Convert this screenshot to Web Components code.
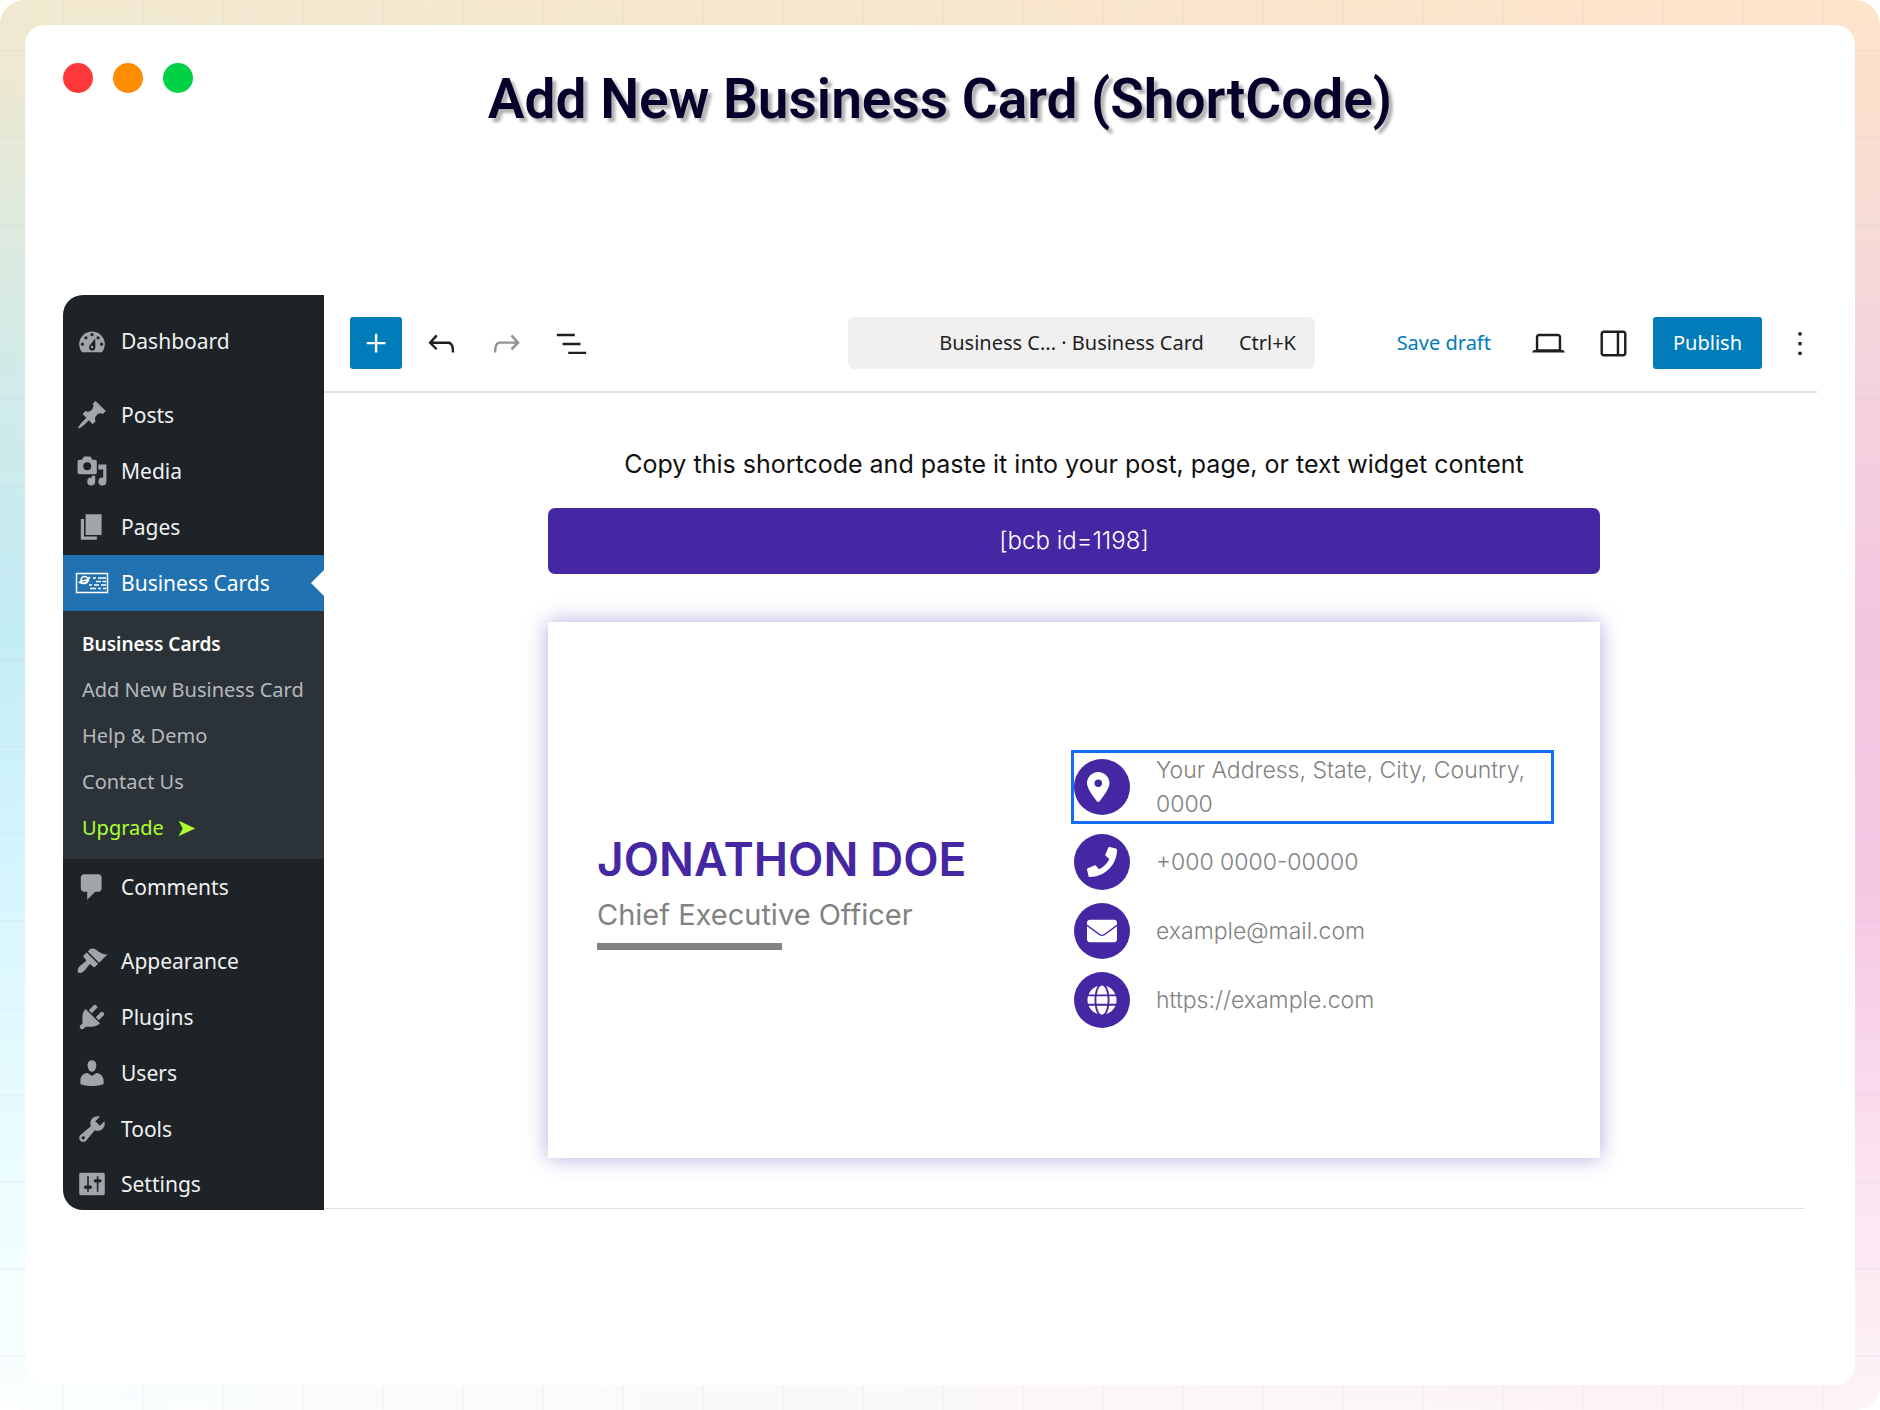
<!DOCTYPE html>
<html lang="en">
<head>
<meta charset="utf-8">
<title>Add New Business Card (ShortCode)</title>
<style>
  body {
    margin: 0;
    font-family: "Noto Sans", "Open Sans", sans-serif;
  }
</style>
</head>
<body>
<window-frame>
  <span slot="title">Add New Business Card (ShortCode)</span>
  <admin-menu slot="menu">
    <menu-item icon="dashboard" class="last">Dashboard</menu-item>
    <menu-item icon="post">Posts</menu-item>
    <menu-item icon="media">Media</menu-item>
    <menu-item icon="page">Pages</menu-item>
    <menu-item icon="card" current>Business Cards</menu-item>
    <sub-menu>
      <sub-item current>Business Cards</sub-item>
      <sub-item>Add New Business Card</sub-item>
      <sub-item>Help &amp; Demo</sub-item>
      <sub-item>Contact Us</sub-item>
      <sub-item upgrade>Upgrade</sub-item>
    </sub-menu>
    <menu-item icon="comment" class="last">Comments</menu-item>
    <menu-item icon="appearance">Appearance</menu-item>
    <menu-item icon="plugin">Plugins</menu-item>
    <menu-item icon="user">Users</menu-item>
    <menu-item icon="tool">Tools</menu-item>
    <menu-item icon="setting">Settings</menu-item>
  </admin-menu>
  <editor-bar slot="bar"></editor-bar>
  <editor-canvas slot="canvas">
    <short-code>[bcb id=1198]</short-code>
    <business-card>
      <span slot="name">JONATHON DOE</span>
      <span slot="role">Chief Executive Officer</span>
      <contact-row icon="pin" selected>Your Address, State, City, Country, 0000</contact-row>
      <contact-row icon="phone">+000 0000-00000</contact-row>
      <contact-row icon="mail">example@mail.com</contact-row>
      <contact-row icon="globe">https://example.com</contact-row>
    </business-card>
  </editor-canvas>
</window-frame>

<script>
(function () {
  const icons = {
    // admin menu, 20 unit grid
    dashboard: ['0 0 20 20', '<path fill-rule="evenodd" d="M3.8 17h12.4c1.1-1.4 1.8-3.1 1.8-5a8 8 0 0 0-16 0c0 1.900.7 3.600 1.800 5zM9 6a1 1 0 1 1 2 0 1 1 0 0 1-2 0zM5.200 8a1 1 0 1 1 2 0 1 1 0 0 1-2 0zM12.800 8a1 1 0 1 1 2 0 1 1 0 0 1-2 0zM3 12a1 1 0 1 1 2 0 1 1 0 0 1-2 0zM15 12a1 1 0 1 1 2 0 1 1 0 0 1-2 0zM12 8.500l.1 5.400a2 2 0 1 1-3.700-.9z"/><circle cx="10" cy="13.800" r=".8"/>'],
    post: ['0 0 20 20', '<path d="M10.440 3.020l1.820-1.820 6.360 6.350-1.830 1.820c-1.050-.68-2.480-.57-3.410.36l-.75.75c-.92.93-1.040 2.350-.35 3.410l-1.830 1.820-2.410-2.410-2.800 2.790c-.42.42-3.380 2.710-3.800 2.290s1.860-3.390 2.280-3.810l2.790-2.790L4.100 9.360l1.830-1.820c1.050.69 2.480.57 3.400-.36l.75-.75c.93-.92 1.050-2.350.36-3.410z"/>'],
    media: ['0 0 20 20', '<path fill-rule="evenodd" d="M13 11V4c0-.55-.45-1-1-1h-1.670L9 1H5L3.670 3H2c-.55 0-1 .45-1 1v7c0 .55.45 1 1 1h10c.55 0 1-.45 1-1zM7 4.500a2.500 2.500 0 1 1 0 5 2.500 2.500 0 0 1 0-5zM14 6h5v10.500a2.500 2.500 0 1 1-2.500-2.500c.17 0 .34.02.5.05V9h-3V6zm-4 8.050V13h2v3.500a2.500 2.500 0 1 1-2.500-2.500c.17 0 .34.02.5.05z"/>'],
    page: ['0 0 20 20', '<path d="M6 15V2h10v13H6zm-1 1h8v2H3V5h2v11z"/>'],
    card: ['0 0 34 22', '<g fill="none" stroke="currentColor" stroke-width="1.500"><path d="M1.500 1.500h31v19h-31z"/><circle cx="9.500" cy="8" r="3.500"/><path d="M4 11q2-3 5-2.500T15 5M5 10.500q4 3 9-3M18 6h3M23 6h8M21 9.500h5M27.500 9.500H31M14 13h3M19 13h5M26 13h5M15 16.500h6M23 16.500h3M28 16.500h3"/></g>'],
    comment: ['0 0 20 20', '<path d="M5 2h9c1.100 0 2 .9 2 2v7c0 1.100-.9 2-2 2h-2l-5 5v-5H5c-1.100 0-2-.9-2-2V4c0-1.100.9-2 2-2z"/>'],
    appearance: ['0 0 20 20', '<path d="M14.480 11.060L7.410 3.990l1.500-1.500c.5-.56 2.300-.47 3.510.32 1.210.8 1.430 1.280 2.910 2.100 1.180.64 2.450 1.260 4.450.85zm-.71.71L6.700 4.700 4.930 6.470c-.39.39-.39 1.020 0 1.410l1.060 1.060c.39.39.39 1.030 0 1.420-.6.6-1.430 1.110-2.210 1.690-.35.26-.7.53-1.010.84C1.430 14.230.4 16.080 1.400 17.070c.99 1 2.840-.03 4.180-1.360.31-.31.58-.66.85-1.020.57-.78 1.080-1.610 1.690-2.210.39-.39 1.020-.39 1.410 0l1.060 1.060c.39.39 1.020.39 1.410 0z"/>'],
    plugin: ['0 0 20 20', '<path d="M13.110 4.360L9.870 7.600 8 5.730l3.240-3.240c.35-.34 1.050-.2 1.560.32.52.51.66 1.210.31 1.550zm-8 1.770l.91-1.120 9.010 9.010-1.190.84c-.71.71-2.630 1.160-3.820 1.160H6.140L4.900 17.260c-.59.59-1.540.59-2.120 0-.59-.58-.59-1.530 0-2.120l1.240-1.240v-3.880c0-1.130.4-3.190 1.090-3.890zm7.260 3.970l3.240-3.240c.34-.35 1.040-.21 1.550.31.52.51.66 1.210.31 1.550l-3.240 3.250z"/>'],
    user: ['0 0 20 20', '<path d="M10 9.250c-2.270 0-2.730-3.440-2.730-3.440C7 4.020 7.820 2 9.970 2c2.160 0 2.980 2.020 2.710 3.810 0 0-.41 3.440-2.680 3.440zm0 2.570L12.720 10c2.390 0 4.520 2.330 4.520 4.530v2.490s-3.650 1.130-7.240 1.130c-3.650 0-7.240-1.130-7.240-1.130v-2.490c0-2.250 1.940-4.480 4.470-4.480z"/>'],
    tool: ['0 0 20 20', '<path fill-rule="evenodd" d="M16.680 9.770c-1.340 1.340-3.300 1.670-4.950.99l-5.410 6.520c-.99.99-2.590.99-3.580 0s-.99-2.590 0-3.570l6.520-5.420c-.68-1.650-.35-3.610.99-4.950 1.280-1.280 3.120-1.620 4.720-1.060l-2.890 2.890 2.820 2.820 2.860-2.870c.53 1.580.18 3.390-1.080 4.650zM3.810 16.210c.4.39 1.040.39 1.430 0 .4-.4.4-1.040 0-1.430-.39-.4-1.030-.4-1.430 0-.39.39-.39 1.030 0 1.430z"/>'],
    setting: ['0 0 20 20', '<path fill-rule="evenodd" d="M18 16V4c0-.55-.45-1-1-1H3c-.55 0-1 .45-1 1v12c0 .55.45 1 1 1h14c.55 0 1-.45 1-1zM8 11h1c.55 0 1 .45 1 1s-.45 1-1 1H8v1.500c0 .28-.22.5-.5.5s-.5-.22-.5-.5V13H6c-.55 0-1-.45-1-1s.45-1 1-1h1V5.500c0-.28.22-.5.5-.5s.5.22.5.5V11zm5-2h-1c-.55 0-1-.45-1-1s.45-1 1-1h1V5.500c0-.28.22-.5.5-.5s.5.22.5.5V7h1c.55 0 1 .45 1 1s-.45 1-1 1h-1v5.500c0 .28-.22.5-.5.5s-.5-.22-.5-.5V9z"/>'],
    // editor bar, 24 unit grid
    plus: ['0 0 24 24', '<path d="M11 12.500V17.500H12.500V12.500H17.500V11H12.500V6H11V11H6V12.500H11Z"/>'],
    undo: ['0 0 24 24', '<path d="M18.300 11.700c-.6-.6-1.400-.9-2.300-.9H6.700l2.900-3.300-1.100-1-4.500 5L8.500 16l1-1-2.700-2.700H16c.5 0 .9.2 1.300.5 1 1 1 3.400 1 4.500v.3h1.500v-.2c0-1.500 0-4.300-1.500-5.700z"/>'],
    redo: ['0 0 24 24', '<path d="M15.600 6.500l-1.100 1 2.900 3.300H8c-.9 0-1.700.3-2.300.9-1.400 1.500-1.400 4.200-1.400 5.600v.2h1.500v-.3c0-1.100 0-3.500 1-4.500.3-.3.7-.5 1.300-.5h9.200L14.500 15l1.100 1.100 4.600-4.600-4.600-5z"/>'],
    list: ['0 0 24 24', '<path d="M3 6h11v1.500H3V6Zm3.500 5.500h11V13h-11v-1.500ZM21 17H10v1.500h11V17Z"/>'],
    laptop: ['0 0 24 24', '<path fill-rule="evenodd" d="M20.500 16h-.7V8c0-1.100-.9-2-2-2H6.200c-1.100 0-2 .9-2 2v8h-.7c-.8 0-1.500.7-1.500 1.500h20c0-.8-.7-1.500-1.500-1.500zM5.700 8c0-.3.2-.5.5-.5h11.600c.3 0 .5.2.5.5v7.600H5.700V8z"/>'],
    drawer: ['0 0 24 24', '<path fill-rule="evenodd" d="M18 4H6c-1.100 0-2 .9-2 2v12c0 1.100.9 2 2 2h12c1.100 0 2-.9 2-2V6c0-1.100-.9-2-2-2zm-4 14.500H6c-.3 0-.5-.2-.5-.5V6c0-.3.2-.5.5-.5h8v13zm4.500-.5c0 .3-.2.5-.5.5h-2.500v-13H18c.3 0 .5.2.5.5v12z"/>'],
    more: ['6 0 12 24', '<path d="M13 19h-2v-2h2v2zm0-6h-2v-2h2v2zm0-6h-2V5h2v2z"/>'],
    // contact details
    pin: ['0 0 512 512', '<path fill-rule="evenodd" d="M215.700 499.200C267 435 384 279.400 384 192C384 86 298 0 192 0S0 86 0 192c0 87.400 117 243 168.300 307.200c12.300 15.300 35.100 15.300 47.400 0zM192 128a64 64 0 1 1 0 128 64 64 0 1 1 0-128z"/>'],
    phone: ['0 0 512 512', '<path d="M493.400 24.600l-104-24c-11.300-2.600-22.900 3.300-27.500 13.900l-48 112c-4.200 9.800-1.400 21.300 6.900 28l60.600 49.600c-36 76.700-98.900 140.500-177.200 177.200l-49.600-60.600c-6.800-8.300-18.200-11.100-28-6.900l-112 48C3.900 366.500-2 378.100.6 389.400l24 104C27.100 504.200 36.700 512 48 512c256.100 0 464-207.500 464-464 0-11.200-7.700-20.900-18.600-23.400z"/>'],
    mail: ['0 0 512 512', '<path d="M48 64h416c26 0 48 22 48 48v34L292 307c-22 16-50 16-72 0L0 146v-34c0-26 22-48 48-48zM0 176l204 149c32 23 72 23 104 0l204-149v224c0 26-22 48-48 48H48c-26 0-48-22-48-48z"/>'],
    globe: ['0 0 496 512', '<path d="M336.500 160C322 70.700 287.800 8 248 8s-74 62.700-88.500 152h177zM152 256c0 22.200 1.200 43.500 3.300 64h185.300c2.100-20.500 3.300-41.800 3.300-64s-1.200-43.500-3.300-64H155.300c-2.100 20.500-3.300 41.800-3.300 64zm324.700-96c-28.600-67.900-86.500-120.400-158-141.600 24.400 33.800 41.200 84.700 50 141.600h108zM177.200 18.400C105.800 39.600 47.800 92.100 19.300 160h108c8.700-56.900 25.500-107.800 49.900-141.600zM487.400 192H372.700c2.100 21 3.300 42.500 3.300 64s-1.200 43-3.300 64h114.600c5.500-20.500 8.600-41.800 8.600-64s-3.100-43.500-8.500-64zM120 256c0-21.500 1.200-43 3.300-64H8.600C3.200 212.500 0 233.800 0 256s3.200 43.500 8.600 64h114.600c-2-21-3.200-42.500-3.200-64zm39.500 96c14.500 89.300 48.700 152 88.500 152s74-62.700 88.500-152h-177zm159.300 141.600c71.400-21.200 129.400-73.700 158-141.600h-108c-8.800 56.900-25.600 107.800-50 141.600zM19.300 352c28.600 67.900 86.500 120.400 158 141.600-24.400-33.800-41.200-84.700-50-141.600h-108z"/>']
  }

  function icon (name) {
    const [box, body] = icons[name]
    return `<svg viewBox="${box}" fill="currentColor" aria-hidden="true">${body}</svg>`
  }

  // register an element whose shadow root is the markup given by render
  function define (name, render) {
    window.customElements.define(name, class extends HTMLElement {
      constructor () {
        super()
        this.attachShadow({mode: 'open'})
      }

      connectedCallback () {
        const template = document.createElement('template')
        template.innerHTML = render(this)
        this.shadowRoot.replaceChildren(template.content.cloneNode(true))
      }
    })
  }

  define('window-frame', () => `<style>
      :host {
        display: block;
        position: relative;
        box-sizing: border-box;
        min-height: 100vh;
        padding: 25px;
        border-radius: 25px;
        overflow: hidden;
        background: linear-gradient(#fde5cb, #fbe0cd 7%, #f6dcd5 15%, #f4d5dc 24%, #f3c5e0 45%, #f6c8e4 64%, #fce6f1 86%, #fdf4f8);
      }
      /* cool side of the backdrop, fading out to the right */
      :host::before,
      :host::after {
        content: "";
        position: absolute;
        inset: 0;
      }
      :host::before {
        background: linear-gradient(#f1e9d0, #ebe9d3 7%, #dfeadd 15%, #d3eae6 24%, #c3edf5 45%, #d8f6fe 64%, #effeff 86%, #fafefe);
        mask-image: linear-gradient(to right, #000, transparent 90%);
      }
      /* faint grid lines */
      :host::after {
        background:
          repeating-linear-gradient(to right, transparent 0 62px, rgba(200, 190, 220, .12) 62px 64px, transparent 64px 80px),
          repeating-linear-gradient(transparent 0 50px, rgba(200, 190, 220, .12) 50px 52px, transparent 52px 87px);
      }
      .window {
        position: relative;
        z-index: 1;
        display: flex;
        flex-direction: column;
        box-sizing: border-box;
        min-height: calc(100vh - 50px);
        padding: 38px 38px 175px;
        border-radius: 20px;
        background: #fff;
      }
      header {
        display: grid;
        grid-template-columns: 1fr auto 1fr;
        margin-bottom: 160px;
      }
      .dots {
        display: flex;
        gap: 20px;
      }
      .dots i {
        width: 30px;
        height: 30px;
        border-radius: 50%;
        background: #ff3939;
      }
      .dots i:nth-child(2) { background: #ff8c00; }
      .dots i:nth-child(3) { background: #00d146; }
      h1 {
        margin: 0;
        font: 600 55px/72px Roboto, sans-serif;
        color: #06002b;
        text-shadow: 4px 4px 3px rgba(0, 0, 0, .3);
      }
      .workspace {
        flex: 1;
        display: grid;
        grid-template-columns: 261px 1fr;
      }
      .editor {
        display: flex;
        flex-direction: column;
        min-width: 0;
      }
    </style>
    <div class="window">
      <header>
        <div class="dots"><i></i><i></i><i></i></div>
        <h1><slot name="title"></slot></h1>
      </header>
      <div class="workspace">
        <slot name="menu"></slot>
        <div class="editor">
          <slot name="bar"></slot>
          <slot name="canvas"></slot>
        </div>
      </div>
    </div>`)

  define('admin-menu', () => `<style>
      :host {
        display: block;
        padding-top: 18px;
        border-radius: 20px 0 0 20px;
        background: #1d2327;
        overflow: hidden;
      }
      /* last entry of a group */
      ::slotted(.last) { margin-bottom: 18px; }
    </style>
    <nav><slot></slot></nav>`)

  define('menu-item', el => `<style>
      :host { display: block; }
      a {
        display: flex;
        align-items: center;
        height: 56px;
        padding-left: 12px;
        font-size: 21px;
        line-height: 28px;
        color: #f0f0f1;
        text-decoration: none;
      }
      svg {
        width: 34px;
        height: 32px;
        margin-right: 12px;
        color: #a0a5aa;
      }
      :host([current]) a {
        background: #2271b1;
        color: #fff;
      }
      :host([current]) svg { color: #fff; }
      :host([current]) a::after {
        content: "";
        width: 13px;
        height: 26px;
        margin-left: auto;
        background: #fff;
        clip-path: polygon(100% 0, 0 50%, 100% 100%);
      }
      :host(:last-child) a { height: 53px; }
    </style>
    <a href="#">${icon(el.getAttribute('icon'))}<slot></slot></a>`)

  define('sub-menu', () => `<style>
      :host {
        display: block;
        padding: 10px 0 8px;
        background: #2c3338;
      }
    </style>
    <slot></slot>`)

  define('sub-item', el => `<style>
      :host { display: block; }
      a {
        display: flex;
        align-items: center;
        gap: 12px;
        height: 46px;
        padding-left: 19px;
        font-size: 20px;
        line-height: 28px;
        color: #b4b9be;
        text-decoration: none;
        white-space: nowrap;
      }
      :host([current]) a {
        font-size: 19px;
        font-weight: 600;
        color: #fff;
      }
      :host([upgrade]) a { color: #adff2f; }
      b { font: 24px/28px "DejaVu Sans", sans-serif; }
    </style>
    <a href="#"><slot></slot>${el.hasAttribute('upgrade') ? '<b>➤</b>' : ''}</a>`)

  define('editor-bar', () => `<style>
      :host {
        display: grid;
        grid-template-columns: 1fr 467px 1fr;
        padding: 22px 0 22px 22px;
        border-bottom: 2px solid #e0e0e0;
      }
      .group {
        display: flex;
        gap: 13px;
        padding-left: 4px;
      }
      .end { justify-content: flex-end; }
      button {
        display: flex;
        align-items: center;
        justify-content: center;
        height: 52px;
        padding: 0;
        border: 0;
        border-radius: 3px;
        background: none;
        font: 20px/28px "Noto Sans", "Open Sans", sans-serif;
        color: #1e1e1e;
        white-space: nowrap;
      }
      button[aria-label] { width: 52px; }
      svg {
        flex: none;
        width: 39px;
        height: 39px;
      }
      button.primary {
        background: #007cba;
        color: #fff;
      }
      button:disabled { color: #949494; }
      .document {
        justify-content: flex-end;
        gap: 35px;
        padding: 0 19px;
        border-radius: 6px;
        background: #f0f0f0;
      }
      .draft {
        padding: 0 19px;
        color: #007cba;
      }
      .publish { padding: 0 20px; }
      button.more {
        justify-content: flex-end;
        width: 42px;
        padding-right: 7px;
      }
      .more svg { width: 20px; }
    </style>
    <div class="group">
      <button class="primary" aria-label="Add block">${icon('plus')}</button>
      <button aria-label="Undo">${icon('undo')}</button>
      <button aria-label="Redo" disabled>${icon('redo')}</button>
      <button aria-label="Document overview">${icon('list')}</button>
    </div>
    <button class="document"><span>Business C... · Business Card</span><span>Ctrl+K</span></button>
    <div class="group end">
      <button class="draft">Save draft</button>
      <button aria-label="View">${icon('laptop')}</button>
      <button aria-label="Settings">${icon('drawer')}</button>
      <button class="primary publish">Publish</button>
      <button class="more" aria-label="Options">${icon('more')}</button>
    </div>`)

  define('editor-canvas', () => `<style>
      :host {
        display: block;
        flex: 1;
        box-sizing: border-box;
        margin: 0 12px 1px 0;
        padding: 54px 205px 50px 224px;
        border-bottom: 1px solid #e0e0e0;
        font-family: Inter, sans-serif;
      }
    </style>
    <slot></slot>`)

  define('short-code', () => `<style>
      :host {
        display: block;
        margin-bottom: 48px;
        text-align: center;
      }
      p {
        margin: 0 0 27px;
        font-size: 25px;
        line-height: 34px;
        color: #111;
      }
      button {
        width: 100%;
        height: 66px;
        border: 0;
        border-radius: 7px;
        background: #4527a4;
        font: 300 24px/34px Inter, sans-serif;
        color: #fff;
      }
    </style>
    <p>Copy this shortcode and paste it into your post, page, or text widget content</p>
    <button><slot></slot></button>`)

  define('business-card', () => `<style>
      :host {
        display: grid;
        grid-template-columns: 1fr 477px;
        align-items: center;
        box-sizing: border-box;
        min-height: 536px;
        padding: 0 49px;
        background: #fff;
        box-shadow: 0 0 20px rgba(69, 39, 164, .4);
      }
      h2 {
        margin: 0;
        font-size: 46px;
        font-weight: 600;
        line-height: 64px;
        color: #4527a4;
      }
      p {
        margin: 0;
        font-size: 29px;
        line-height: 48px;
        color: #828282;
      }
      hr {
        width: 185px;
        height: 7px;
        margin: 4px 0;
        border: 0;
        background: #828282;
      }
      address {
        display: grid;
        gap: 13px;
        font-style: normal;
      }
    </style>
    <div>
      <h2><slot name="name"></slot></h2>
      <p><slot name="role"></slot></p>
      <hr>
    </div>
    <address><slot></slot></address>`)

  define('contact-row', el => `<style>
      :host {
        display: flex;
        align-items: center;
        gap: 26px;
        font-size: 23px;
        font-weight: 300;
        line-height: 34px;
        color: #828282;
      }
      :host([selected]) { outline: 3px solid #146ef5; }
      i {
        flex: none;
        display: flex;
        align-items: center;
        justify-content: center;
        width: 56px;
        height: 56px;
        border-radius: 50%;
        background: #4527a4;
        color: #fff;
      }
      svg {
        width: 30px;
        height: 30px;
      }
    </style>
    <i>${icon(el.getAttribute('icon'))}</i>
    <span><slot></slot></span>`)
})()
</script>
</body>
</html>
